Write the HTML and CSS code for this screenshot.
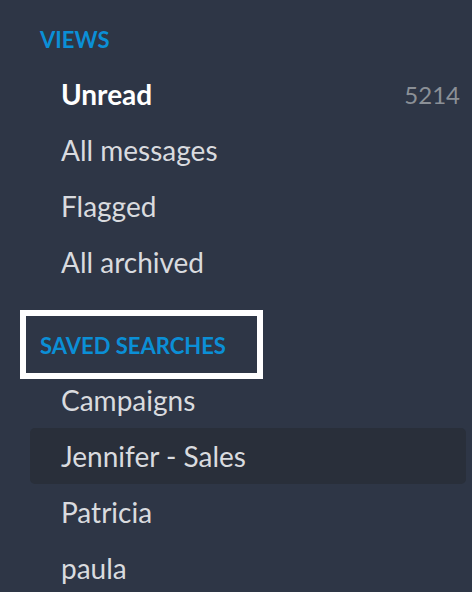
FILE: index.html
```html
<!DOCTYPE html>
<html lang="en">
<head>
    <meta charset="UTF-8">
    <title>Mail sidebar</title>
    <link rel="stylesheet" href="styles.css">
</head>
<body>
    <div class="sidebar">
        <h2 class="section-title first">VIEWS</h2>
        <ul class="nav">
            <li class="nav-item unread"><span>Unread</span><span class="count">5214</span></li>
            <li class="nav-item">All messages</li>
            <li class="nav-item">Flagged</li>
            <li class="nav-item">All archived</li>
        </ul>

        <div class="title-wrap">
            <h2 class="section-title">SAVED SEARCHES</h2>
            <div class="callout"></div>
        </div>
        <ul class="nav">
            <li class="nav-item">Campaigns</li>
            <li class="nav-item active">Jennifer - Sales</li>
            <li class="nav-item">Patricia</li>
            <li class="nav-item">paula</li>
        </ul>
    </div>
</body>
</html>
```

FILE: styles.css
```css
body {
    margin: 0;
    padding: 0;
    background-color: #2e3646;
    font-family: Lato, "Open Sans", sans-serif;
    overflow: hidden;
}
.sidebar {
    padding: 0 6px 0 30px;
}
.title-wrap {
    position: relative;
    margin-top: 42px;
}
.section-title {
    margin: 0 0 12px 10px;
    font-size: 22px;
    line-height: 28px;
    font-weight: 700;
    color: #0b8fd6;
}
.section-title.first {
    margin-top: 26px;
}
/* white annotation box drawn over the heading */
.callout {
    position: absolute;
    left: -10px;
    top: -22px;
    width: 231px;
    height: 57px;
    border: 6px solid #fff;
}
.nav {
    list-style: none;
    margin: 0;
    padding: 0;
}
.nav-item {
    display: flex;
    justify-content: space-between;
    align-items: center;
    height: 56px;
    padding-left: 31px;
    font-size: 28px;
    color: #d9dbdf;
    border-radius: 5px;
}
.nav-item.unread {
    font-weight: 700;
    color: #fff;
}
.nav-item.active {
    background-color: #292f3a;
}
.count {
    padding-right: 6px;
    font-size: 24px;
    font-weight: 400;
    color: #8b9097;
}
```
